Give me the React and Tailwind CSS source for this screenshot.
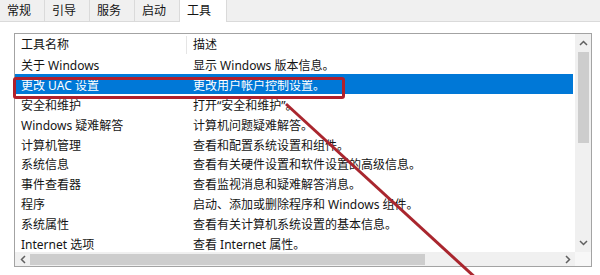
import React from 'react'

const tabs = ['常规', '引导', '服务', '启动']

const rows = [
    ['关于 Windows', '显示 Windows 版本信息。'],
    ['更改 UAC 设置', '更改用户帐户控制设置。'],
    ['安全和维护', '打开“安全和维护”。'],
    ['Windows 疑难解答', '计算机问题疑难解答。'],
    ['计算机管理', '查看和配置系统设置和组件。'],
    ['系统信息', '查看有关硬件设置和软件设置的高级信息。'],
    ['事件查看器', '查看监视消息和疑难解答消息。'],
    ['程序', '启动、添加或删除程序和 Windows 组件。'],
    ['系统属性', '查看有关计算机系统设置的基本信息。'],
    ['Internet 选项', '查看 Internet 属性。'],
]

const App = () => {
    return (
        <div className="relative w-[600px] h-[275px] overflow-hidden bg-white text-[12px] text-[#141414] font-['Noto_Sans','Noto_Sans_CJK_SC',sans-serif]">
            {/* Tabs */}
            <div className="flex h-[22px] bg-[#f0f0f0] border-b border-[#dadada]">
                {tabs.map((t) => (
                    <div
                        key={t}
                        className="w-[45px] h-full flex items-center pl-[7px] pt-[1px] border-r border-[#dadada] leading-none"
                    >
                        {t}
                    </div>
                ))}
                <div className="w-[47px] h-[22px] -mb-px bg-white border-r border-[#dadada] flex items-center pl-[7px] pb-[1px] leading-none">
                    工具
                </div>
            </div>

            {/* List box */}
            <div className="pt-[11px] pl-[14px]">
                <div className="w-[578px] h-[234px] border border-[#a3a3a3] flex flex-col">
                    <div className="flex flex-1 min-h-0">
                        <div className="flex-1 flex flex-col">
                            <div className="flex h-[23px] items-center pt-[2px]">
                                <div className="w-[172px] pl-[6px] h-full flex items-center border-r border-[#e5e5e5]">工具名称</div>
                                <div className="pl-[6px]">描述</div>
                            </div>
                            {rows.map(([name, desc], i) => (
                                <div
                                    key={name}
                                    className={
                                        i === 1
                                            ? 'flex h-[19.8px] items-center pt-[5px] bg-[#0078d7] text-white mr-[2px]'
                                            : 'flex h-[19.8px] items-center pt-[5px]'
                                    }
                                >
                                    <div className="w-[172px] pl-[6px] whitespace-nowrap">{name}</div>
                                    <div className="pl-[6px] whitespace-nowrap">{desc}</div>
                                </div>
                            ))}
                        </div>
                        {/* vertical scrollbar */}
                        <div className="w-[16px] bg-[#f0f0f0] flex flex-col items-center">
                            <div className="h-[18px] flex items-center justify-center">
                                <svg width="9" height="6" viewBox="0 0 9 6">
                                    <path d="M1 5 L4.5 1.5 L8 5" fill="none" stroke="#606060" strokeWidth="1.5" />
                                </svg>
                            </div>
                            <div className="w-[11px] h-[91px] bg-[#cdcdcd]" />
                            <div className="flex-1" />
                            <div className="h-[18px] flex items-center justify-center">
                                <svg width="9" height="6" viewBox="0 0 9 6">
                                    <path d="M1 1 L4.5 4.5 L8 1" fill="none" stroke="#606060" strokeWidth="1.5" />
                                </svg>
                            </div>
                        </div>
                    </div>
                    {/* horizontal scrollbar */}
                    <div className="h-[14px] flex">
                        <div className="flex-1 bg-[#f0f0f0] flex items-center">
                            <div className="w-[15px] flex justify-center">
                                <svg width="6" height="9" viewBox="0 0 6 9">
                                    <path d="M5 1 L1.5 4.5 L5 8" fill="none" stroke="#606060" strokeWidth="1.5" />
                                </svg>
                            </div>
                            <div className="w-[395px] h-[11px] bg-[#cdcdcd]" />
                            <div className="flex-1" />
                            <div className="w-[15px] flex justify-center">
                                <svg width="6" height="9" viewBox="0 0 6 9">
                                    <path d="M1 1 L4.5 4.5 L1 8" fill="none" stroke="#606060" strokeWidth="1.5" />
                                </svg>
                            </div>
                        </div>
                        <div className="w-[16px] bg-[#f7f7f7]" />
                    </div>
                </div>
            </div>

            {/* Annotation */}
            <div className="absolute left-[13px] top-[77px] w-[332px] h-[22px] border-[3px] border-[#b0212c] rounded-[3px]" />
            <svg className="absolute inset-0" width="600" height="275">
                <line x1="286" y1="104" x2="478" y2="280" stroke="#a9262e" strokeWidth="3" />
            </svg>
        </div>
    )
}

export default App
